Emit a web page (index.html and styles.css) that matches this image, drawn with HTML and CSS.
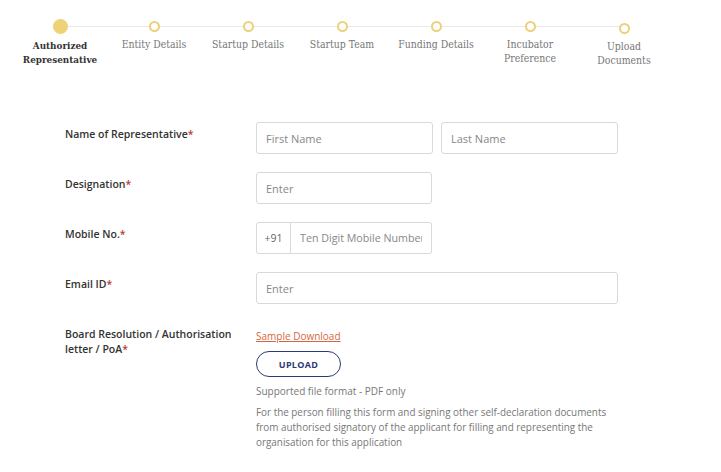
FILE: index.html
```html
<!DOCTYPE html>
<html>
<head>
<meta charset="utf-8">
<link rel="stylesheet" href="styles.css">
</head>
<body>
<div class="stepper">
  <div class="step step-active">
    <div class="dot-row"><span class="dot dot-filled"></span></div>
    <div class="step-label">Authorized<br>Representative</div>
  </div>
  <div class="step">
    <div class="dot-row"><span class="dot"></span></div>
    <div class="step-label">Entity Details</div>
  </div>
  <div class="step">
    <div class="dot-row"><span class="dot"></span></div>
    <div class="step-label">Startup Details</div>
  </div>
  <div class="step">
    <div class="dot-row"><span class="dot"></span></div>
    <div class="step-label">Startup Team</div>
  </div>
  <div class="step">
    <div class="dot-row"><span class="dot"></span></div>
    <div class="step-label">Funding Details</div>
  </div>
  <div class="step">
    <div class="dot-row"><span class="dot"></span></div>
    <div class="step-label">Incubator<br>Preference</div>
  </div>
  <div class="step step-last">
    <div class="dot-row"><span class="dot"></span></div>
    <div class="step-label">Upload<br>Documents</div>
  </div>
</div>

<form class="form">
  <div class="row">
    <label class="label">Name of Representative<span class="req">*</span></label>
    <div class="fields">
      <input class="input w177" placeholder="First Name">
      <input class="input w177" placeholder="Last Name">
    </div>
  </div>
  <div class="row">
    <label class="label">Designation<span class="req">*</span></label>
    <div class="fields">
      <input class="input w176" placeholder="Enter">
    </div>
  </div>
  <div class="row">
    <label class="label">Mobile No.<span class="req">*</span></label>
    <div class="fields">
      <div class="phone">
        <span class="prefix">+91</span>
        <input class="input phone-input" placeholder="Ten Digit Mobile Number">
      </div>
    </div>
  </div>
  <div class="row">
    <label class="label">Email ID<span class="req">*</span></label>
    <div class="fields">
      <input class="input wfull" placeholder="Enter">
    </div>
  </div>
  <div class="row">
    <label class="label">Board Resolution / Authorisation<br>letter / PoA<span class="req">*</span></label>
    <div class="upload-col">
      <a class="sample" href="#">Sample Download</a>
      <button type="button" class="upload-btn">UPLOAD</button>
      <p class="hint">Supported file format - PDF only</p>
      <p class="desc">For the person filling this form and signing other self-declaration documents from authorised signatory of the applicant for filling and representing the organisation for this application</p>
    </div>
  </div>
</form>
</body>
</html>
```

FILE: styles.css
```css
* { box-sizing: border-box; }
body {
  margin: 0;
  background: #fff;
  font-family: "Open Sans", sans-serif;
  color: #333;
}
.stepper {
  display: flex;
  padding: 19px 0 0 13px;
}
.step {
  width: 94px;
  display: flex;
  flex-direction: column;
  align-items: center;
  position: relative;
}
.step::after {
  content: "";
  position: absolute;
  left: 47px;
  width: 94px;
  top: 6.5px;
  height: 1px;
  background: #e8e8e8;
  z-index: 0;
}
.step-last::after { display: none; }
.step-last { padding-top: 2px; }
.dot-row {
  height: 14px;
  display: flex;
  align-items: center;
  justify-content: center;
  position: relative;
  z-index: 1;
}
.dot {
  width: 11px;
  height: 11px;
  border-radius: 50%;
  border: 2px solid #ecd07a;
  background: #fff;
}
.dot-filled {
  width: 15px;
  height: 15px;
  border: none;
  background: #efd277;
}
.step-label {
  margin-top: 4px;
  font-family: "DejaVu Serif Condensed", "DejaVu Serif", serif;
  font-stretch: condensed;
  font-size: 10.4px;
  line-height: 14px;
  color: #777;
  text-align: center;
  white-space: nowrap;
}
.step-active .step-label {
  margin-top: 6px;
  font-size: 9.8px;
  color: #333;
  font-weight: bold;
}
.form {
  margin-top: 55px;
  padding-left: 65px;
}
.row {
  display: grid;
  grid-template-columns: 191px 1fr;
  margin-bottom: 18px;
}
.label {
  font-size: 10.5px;
  font-weight: 600;
  color: #333;
  line-height: 15px;
  padding-top: 5px;
}
.req { color: #c0392b; }
.fields {
  display: flex;
  gap: 8px;
}
.input {
  height: 32px;
  border: 1px solid #d9d9d9;
  border-radius: 3px;
  padding: 0 9px;
  font-family: "Open Sans", sans-serif;
  font-size: 11px;
  color: #333;
  outline: none;
}
.input::placeholder { color: #888; }
.w177 { width: 177px; }
.w176 { width: 176px; }
.wfull { width: 362px; }
.phone {
  display: flex;
  width: 176px;
}
.prefix {
  width: 35px;
  height: 32px;
  border: 1px solid #d9d9d9;
  border-radius: 3px 0 0 3px;
  display: flex;
  align-items: center;
  justify-content: center;
  font-size: 10.5px;
  color: #666;
}
.phone-input {
  width: 141px;
  border-left: none;
  border-radius: 0 3px 3px 0;
  font-size: 10.7px;
}
.upload-col {
  display: flex;
  flex-direction: column;
  align-items: flex-start;
  padding-top: 7px;
}
.sample {
  font-size: 10px;
  line-height: 15px;
  color: #d5673f;
  text-decoration: underline;
}
.upload-btn {
  margin-top: 7px;
  width: 85px;
  height: 26px;
  border: 1px solid #2c3a76;
  border-radius: 13px;
  background: #fff;
  color: #2c3a76;
  font-family: "Open Sans", sans-serif;
  font-weight: 700;
  font-size: 9px;
  letter-spacing: 0.3px;
}
.hint {
  margin: 7px 0 0;
  font-size: 10px;
  line-height: 15px;
  color: #777;
}
.desc {
  margin: 6px 0 0;
  width: 360px;
  font-size: 9.9px;
  line-height: 15px;
  color: #777;
}
```
